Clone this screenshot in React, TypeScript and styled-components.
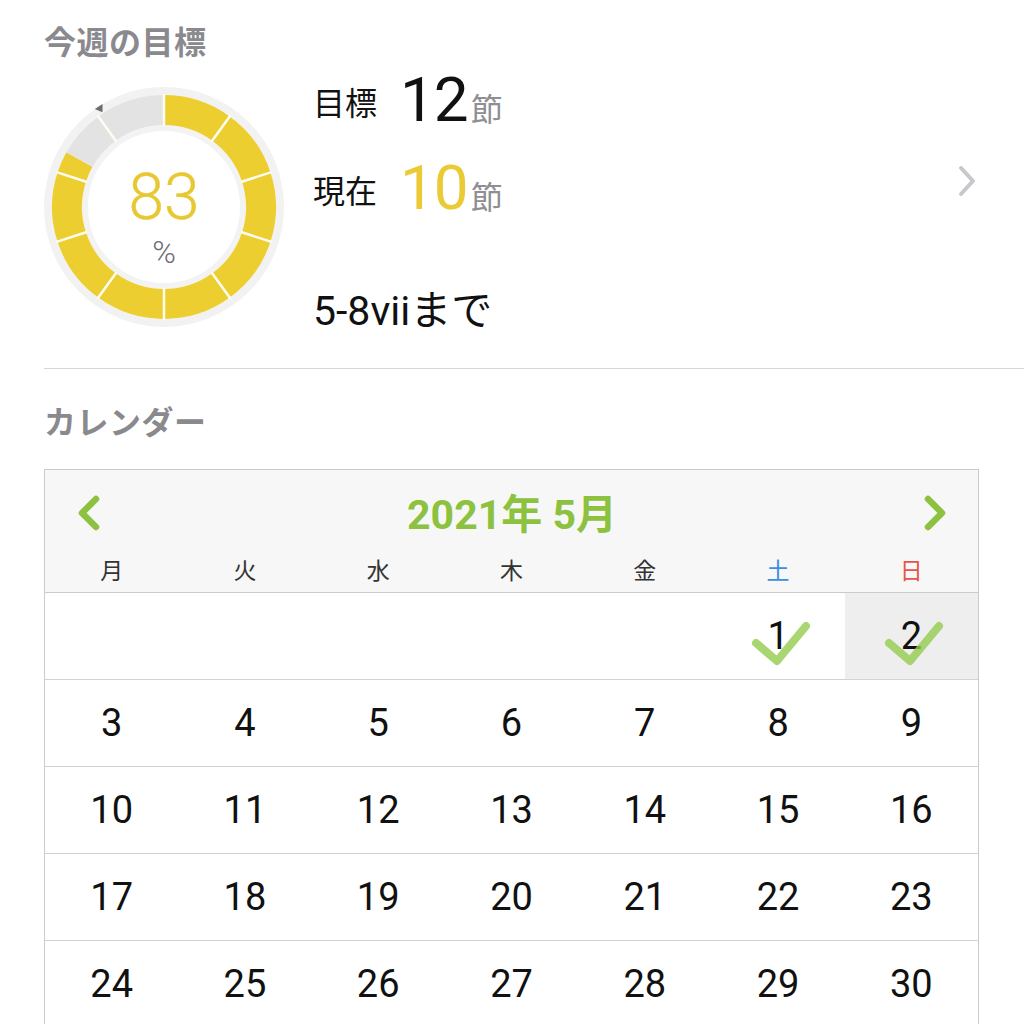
import React from "react";
import styled, { createGlobalStyle } from "styled-components";

const GlobalStyle = createGlobalStyle`
  html, body { margin: 0; padding: 0; background: #ffffff; }
  body {
    font-family: "Roboto", "Noto Sans CJK JP", "Noto Sans", sans-serif;
    color: #111111;
    overflow: hidden;
  }
  * { box-sizing: border-box; }
`;

const Page = styled.div`
  width: 1024px;
  height: 1024px;
  overflow: hidden;
  padding: 20px 0 0 44px;
`;

const SectionTitle = styled.h2<{ $top?: number }>`
  margin: ${(p) => p.$top ?? 0}px 0 0 0;
  font-size: 32px;
  line-height: 40px;
  font-weight: 700;
  color: #8a8a8e;
  font-family: "Noto Sans CJK JP", sans-serif;
  letter-spacing: 0.5px;
`;

const GoalRow = styled.div`
  display: flex;
  align-items: flex-start;
  margin-top: 13px;
`;

const DonutWrap = styled.div`
  position: relative;
  width: 240px;
  height: 240px;
  margin-top: 14px;
  flex: none;
`;

const DonutCenter = styled.div`
  position: absolute;
  inset: 0;
  display: flex;
  flex-direction: column;
  align-items: center;
  padding-top: 81px;
`;

const Percent = styled.div`
  font-family: "Roboto", sans-serif;
  font-weight: 300;
  font-size: 64px;
  line-height: 60px;
  height: 60px;
  color: #e8c832;
  -webkit-text-stroke: 0.4px #e8c832;
`;

const PercentSign = styled.div`
  font-family: "Roboto", sans-serif;
  font-weight: 300;
  font-size: 32px;
  line-height: 32px;
  margin-top: 8px;
  color: #6d6d72;
`;

const Stats = styled.div`
  display: flex;
  flex-direction: column;
  margin-left: 29px;
  flex: 1;
`;

const StatRow = styled.div<{ $gap?: number }>`
  display: flex;
  align-items: center;
  height: 56px;
  margin-top: ${(p) => p.$gap ?? 0}px;
`;

const StatLabel = styled.span`
  font-family: "Noto Sans CJK JP", sans-serif;
  font-size: 32px;
  line-height: 40px;
  color: #111111;
  margin-right: 23px;
`;

const StatValue = styled.span`
  display: inline-flex;
  align-items: baseline;
`;

const Number = styled.span<{ $accent?: boolean }>`
  font-family: "Roboto", sans-serif;
  font-weight: 400;
  font-size: 62px;
  line-height: 56px;
  color: ${(p) => (p.$accent ? "#eacb36" : "#111111")};
  letter-spacing: -1px;
`;

const Unit = styled.span`
  font-family: "Noto Sans CJK JP", sans-serif;
  font-size: 32px;
  color: #8e8e93;
  margin-left: 3px;
`;

const Deadline = styled.div`
  margin-top: 70px;
  font-size: 41px;
  line-height: 48px;
  color: #111111;
`;

const ChevronBox = styled.div`
  margin: 91px 47px 0 0;
  width: 20px;
  height: 34px;
  flex: none;
`;

const Divider = styled.div`
  margin-top: 33px;
  height: 1px;
  background: #d6d6d6;
`;

const Calendar = styled.div`
  margin-top: 29px;
  width: 935px;
  border: 1.5px solid #cbcbcb;
  border-bottom: none;
`;

const CalHeader = styled.div`
  background: #f7f7f7;
  border-bottom: 1.5px solid #cbcbcb;
`;

const NavRow = styled.div`
  display: flex;
  align-items: center;
  height: 80px;
  padding: 10px 31px 0 32px;
`;

const NavButton = styled.div`
  width: 23px;
  height: 36px;
  display: flex;
  align-items: center;
  justify-content: center;
  margin-top: -5px;
`;

const MonthTitle = styled.div`
  flex: 1;
  text-align: center;
  font-size: 41px;
  font-weight: 700;
  line-height: 50px;
  color: #8cc23f;
`;

const WeekRow = styled.div`
  display: grid;
  grid-template-columns: repeat(7, 1fr);
  height: 42px;
`;

const WeekLabel = styled.div<{ $color: string }>`
  text-align: center;
  font-family: "Noto Sans CJK JP", sans-serif;
  font-size: 23px;
  line-height: 38px;
  color: ${(p) => p.$color};
`;

const DayRow = styled.div`
  display: grid;
  grid-template-columns: repeat(7, 1fr);
  height: 87px;
  border-bottom: 1.5px solid #d2d2d2;
`;

const DayCell = styled.div<{ $today?: boolean }>`
  position: relative;
  display: flex;
  align-items: center;
  justify-content: center;
  background: ${(p) => (p.$today ? "#eeeeee" : "transparent")};
  font-size: 38px;
  color: #111111;
`;

const CheckMark = styled.svg`
  position: absolute;
  left: calc(50% - 26px);
  top: 28px;
  width: 60px;
  height: 46px;
  pointer-events: none;
`;

const CX = 120;
const CY = 120;
const pt = (r: number, deg: number) => {
  const a = (deg * Math.PI) / 180;
  return [CX + r * Math.sin(a), CY - r * Math.cos(a)];
};
const sector = (r0: number, r1: number, a0: number, a1: number) => {
  const large = a1 - a0 > 180 ? 1 : 0;
  const [x1, y1] = pt(r1, a0);
  const [x2, y2] = pt(r1, a1);
  const [x3, y3] = pt(r0, a1);
  const [x4, y4] = pt(r0, a0);
  return `M${x1} ${y1} A${r1} ${r1} 0 ${large} 1 ${x2} ${y2} L${x3} ${y3} A${r0} ${r0} 0 ${large} 0 ${x4} ${y4} Z`;
};

const Donut: React.FC<{ percent: number }> = ({ percent }) => {
  const fill = (percent / 100) * 360 + 0.5;
  const segs = 10;
  const step = 360 / segs;
  const pieces: React.ReactNode[] = [];
  for (let i = 0; i < segs; i++) {
    const a0 = i * step;
    const a1 = (i + 1) * step;
    if (fill >= a1) {
      pieces.push(<path key={`y${i}`} d={sector(82, 112, a0, a1)} fill="#ecce30" />);
    } else if (fill <= a0) {
      pieces.push(<path key={`g${i}`} d={sector(82, 112, a0, a1)} fill="#e3e3e3" />);
    } else {
      pieces.push(<path key={`y${i}`} d={sector(82, 112, a0, fill)} fill="#ecce30" />);
      pieces.push(<path key={`g${i}`} d={sector(82, 112, fill, a1)} fill="#e3e3e3" />);
    }
  }
  const dividers = Array.from({ length: segs }, (_, i) => {
    const [x1, y1] = pt(81, i * step);
    const [x2, y2] = pt(113, i * step);
    return <line key={i} x1={x1} y1={y1} x2={x2} y2={y2} stroke="#fffdf2" strokeWidth={2.5} />;
  });
  const m = 327;
  const [tx, ty] = pt(113, m);
  const [lx, ly] = pt(120, m - 2.2);
  const [rx, ry] = pt(120, m + 2.2);
  return (
    <svg width="240" height="240" viewBox="0 0 240 240">
      <circle cx={CX} cy={CY} r={116} fill="none" stroke="#f2f2f2" strokeWidth={8} />
      <circle cx={CX} cy={CY} r={79} fill="none" stroke="#f3f3f3" strokeWidth={6} />
      {pieces}
      {dividers}
      <polygon points={`${tx},${ty} ${lx},${ly} ${rx},${ry}`} fill="#6b6b70" />
    </svg>
  );
};

const Check: React.FC = () => (
  <CheckMark viewBox="0 0 60 46">
    <polyline
      points="4,22 25,40 54,5"
      fill="none"
      stroke="#94cc4e"
      strokeOpacity={0.8}
      strokeWidth={8}
      strokeLinecap="round"
      strokeLinejoin="round"
    />
  </CheckMark>
);

const weekdays: { label: string; color: string }[] = [
  { label: "月", color: "#333333" },
  { label: "火", color: "#333333" },
  { label: "水", color: "#333333" },
  { label: "木", color: "#333333" },
  { label: "金", color: "#333333" },
  { label: "土", color: "#3b8fe0" },
  { label: "日", color: "#e5554d" },
];

// May 2021 starts on Saturday (Monday-first grid => 5 leading blanks)
const buildWeeks = () => {
  const cells: (number | null)[] = [null, null, null, null, null];
  for (let d = 1; d <= 31; d++) cells.push(d);
  while (cells.length % 7 !== 0) cells.push(null);
  const weeks: (number | null)[][] = [];
  for (let i = 0; i < cells.length; i += 7) weeks.push(cells.slice(i, i + 7));
  return weeks;
};

const checked = new Set([1, 2]);
const today = 2;

export default function App() {
  const weeks = buildWeeks();
  return (
    <>
      <GlobalStyle />
      <Page>
        <SectionTitle>今週の目標</SectionTitle>
        <GoalRow>
          <DonutWrap>
            <Donut percent={83} />
            <DonutCenter>
              <Percent>83</Percent>
              <PercentSign>%</PercentSign>
            </DonutCenter>
          </DonutWrap>
          <Stats>
            <StatRow>
              <StatLabel>目標</StatLabel>
              <StatValue>
                <Number>12</Number>
                <Unit>節</Unit>
              </StatValue>
            </StatRow>
            <StatRow $gap={32}>
              <StatLabel>現在</StatLabel>
              <StatValue>
                <Number $accent>10</Number>
                <Unit>節</Unit>
              </StatValue>
            </StatRow>
            <Deadline>5-8viiまで</Deadline>
          </Stats>
          <ChevronBox>
            <svg width="20" height="34" viewBox="0 0 20 34">
              <polyline
                points="4,4 16,17 4,30"
                fill="none"
                stroke="#c7c7cc"
                strokeWidth={4}
                strokeLinecap="round"
                strokeLinejoin="round"
              />
            </svg>
          </ChevronBox>
        </GoalRow>
        <Divider />
        <SectionTitle $top={31}>カレンダー</SectionTitle>
        <Calendar>
          <CalHeader>
            <NavRow>
              <NavButton>
                <svg width="23" height="36" viewBox="0 0 23 36">
                  <polyline
                    points="19,4 5,18 19,32"
                    fill="none"
                    stroke="#8cc23f"
                    strokeWidth={6.5}
                    strokeLinecap="round"
                    strokeLinejoin="round"
                  />
                </svg>
              </NavButton>
              <MonthTitle>2021年 5月</MonthTitle>
              <NavButton>
                <svg width="23" height="36" viewBox="0 0 23 36">
                  <polyline
                    points="4,4 18,18 4,32"
                    fill="none"
                    stroke="#8cc23f"
                    strokeWidth={6.5}
                    strokeLinecap="round"
                    strokeLinejoin="round"
                  />
                </svg>
              </NavButton>
            </NavRow>
            <WeekRow>
              {weekdays.map((w) => (
                <WeekLabel key={w.label} $color={w.color}>
                  {w.label}
                </WeekLabel>
              ))}
            </WeekRow>
          </CalHeader>
          {weeks.map((week, wi) => (
            <DayRow key={wi}>
              {week.map((d, di) => (
                <DayCell key={di} $today={d === today}>
                  {d ?? ""}
                  {d !== null && checked.has(d) && <Check />}
                </DayCell>
              ))}
            </DayRow>
          ))}
        </Calendar>
      </Page>
    </>
  );
}
